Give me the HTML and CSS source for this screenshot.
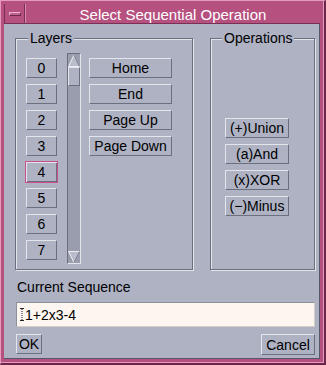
FILE: index.html
```html
<!DOCTYPE html>
<html>
<head>
<meta charset="utf-8">
<link rel="stylesheet" href="styles.css">
</head>
<body>
<div class="window">
  <div class="titlebar">
    <div class="menu-btn"><span class="menu-bar"></span></div>
    <div class="title">Select Sequential Operation</div>
  </div>
  <div class="client">
    <div class="groups">
      <div class="group layers">
        <div class="legend">Layers</div>
        <div class="layers-body">
          <div class="col layer-col">
            <button class="btn layer">0</button>
            <button class="btn layer">1</button>
            <button class="btn layer">2</button>
            <button class="btn layer">3</button>
            <button class="btn layer focused">4</button>
            <button class="btn layer">5</button>
            <button class="btn layer">6</button>
            <button class="btn layer">7</button>
          </div>
          <div class="scrollbar">
            <div class="arrow">
              <svg width="12" height="13" viewBox="0 0 12 13"><polygon points="6,1 11.5,12.5 0.5,12.5" fill="#b9bccb" stroke="none"/><path d="M0.5 12.5 L6 1" stroke="#eceef3" fill="none"/><path d="M6 1 L11.5 12.5" stroke="#808391" fill="none"/><path d="M0.5 12.5 H11.5" stroke="#eceef3" fill="none"/></svg>
            </div>
            <div class="thumb"></div>
            <div class="trough"></div>
            <div class="arrow">
              <svg width="12" height="12" viewBox="0 0 12 12"><polygon points="0.5,0.5 11.5,0.5 6,11.5" fill="#b9bccb" stroke="none"/><path d="M0.5 0.5 H11.5" stroke="#eceef3" fill="none"/><path d="M0.5 0.5 L6 11.5" stroke="#eceef3" fill="none"/><path d="M11.5 0.5 L6 11.5" stroke="#808391" fill="none"/></svg>
            </div>
          </div>
          <div class="col nav-col">
            <button class="btn nav">Home</button>
            <button class="btn nav">End</button>
            <button class="btn nav">Page Up</button>
            <button class="btn nav">Page Down</button>
          </div>
        </div>
      </div>
      <div class="group ops">
        <div class="legend">Operations</div>
        <div class="ops-body">
          <button class="btn op">(+)Union</button>
          <button class="btn op">(a)And</button>
          <button class="btn op">(x)XOR</button>
          <button class="btn op">(&minus;)Minus</button>
        </div>
      </div>
    </div>
    <div class="seq">
      <div class="seq-label">Current Sequence</div>
      <div class="field">
        <svg class="caret" width="4" height="13" viewBox="0 0 4 13"><path d="M0 0.5 H4 M0 12.5 H4" stroke="#222" stroke-width="1" fill="none"/><path d="M2 1 V12" stroke="#222" stroke-width="1" stroke-dasharray="1 1" fill="none"/></svg>
        <span class="field-text">1+2x3-4</span>
      </div>
      <div class="actions">
        <button class="btn ok">OK</button>
        <button class="btn cancel">Cancel</button>
      </div>
    </div>
  </div>
</div>
</body>
</html>
```

FILE: styles.css
```css
* { box-sizing: border-box; }

html, body {
  margin: 0;
  padding: 0;
  background: #b5507f;
}

body {
  font-family: "Liberation Sans", Arial, sans-serif;
  font-size: 14px;
  color: #000;
}

.window {
  width: 326px;
  height: 365px;
  background: #b5507f;
  border-style: solid;
  border-width: 1px 2px 2px 1px;
  border-color: #e69bbd #6a2749 #6a2749 #e69bbd;
  box-shadow: inset -1px -1px 0 #e69bbd;
  padding: 3px 4px 4px 3px;
  display: flex;
  flex-direction: column;
}

.titlebar {
  height: 20px;
  display: flex;
  border-left: 1px solid #7a2f55;
  border-bottom: 1px solid #7a2f55;
  background: #b5507f;
}

.menu-btn {
  width: 20px;
  border-right: 1px solid #7a2f55;
  display: flex;
  align-items: center;
  justify-content: center;
  padding-left: 1px;
}

.menu-bar {
  display: block;
  width: 12px;
  height: 4px;
  background: #c4628f;
  border-style: solid;
  border-width: 1px;
  border-color: #f0b4cf #6a2749 #6a2749 #f0b4cf;
}

.title {
  flex: 1;
  border-left: 1px solid #d98aaf;
  color: #fff;
  font-size: 15px;
  line-height: 19px;
  text-align: center;
  padding-top: 1px;
}

.client {
  flex: 1;
  background: #aeb2c3;
  border-right: 1px solid #55586a;
  border-bottom: 1px solid #55586a;
  padding: 14px 3px 0 11px;
  display: flex;
  flex-direction: column;
}

.groups {
  display: flex;
  gap: 17px;
  height: 232px;
}

.group {
  border: 1px solid #6c6f7e;
  box-shadow: inset 1px 1px 0 #e3e5ec, 1px 1px 0 #e3e5ec;
  height: 232px;
}

.group.layers { width: 178px; }
.group.ops { width: 105px; }

.legend {
  width: fit-content;
  background: #aeb2c3;
  line-height: 16px;
  height: 16px;
  padding: 0 2px;
  margin: -9px 0 -7px 12px;
  position: relative;
}

.group.ops .legend { margin-left: 11px; }

.layers-body {
  display: flex;
  align-items: flex-start;
  padding: 14px 0 0 10px;
}

.col {
  display: flex;
  flex-direction: column;
  gap: 6px;
  margin-top: 5px;
}

.btn {
  font-family: "Liberation Sans", Arial, sans-serif;
  font-size: 14px;
  color: #000;
  background: #aeb2c3;
  border-style: solid;
  border-width: 1px;
  border-color: #e3e5ec #6c6f7e #6c6f7e #e3e5ec;
  padding: 0;
  margin: 0;
  height: 20px;
  line-height: 18px;
  text-align: center;
  white-space: nowrap;
  outline: none;
}

.btn.layer { width: 31px; }

.btn.layer.focused {
  width: 33px;
  height: 22px;
  margin: -1px 0 -1px -1px;
  border-color: #c8508a;
  box-shadow: inset 1px 1px 0 #e3e5ec, inset -1px -1px 0 #6c6f7e;
  line-height: 20px;
}

.nav-col { margin-left: 8px; }
.btn.nav { width: 83px; }

.scrollbar {
  margin-left: 9px;
  width: 14px;
  height: 211px;
  background: #9a9dad;
  border-style: solid;
  border-width: 1px;
  border-color: #6c6f7e #e3e5ec #e3e5ec #6c6f7e;
  display: flex;
  flex-direction: column;
}

.arrow {
  display: flex;
  line-height: 0;
}

.arrow svg { display: block; }

.thumb {
  height: 19px;
  background: #aeb2c3;
  border-style: solid;
  border-width: 1px;
  border-color: #e3e5ec #6c6f7e #6c6f7e #e3e5ec;
}

.trough { flex: 1; }

.ops-body {
  display: flex;
  flex-direction: column;
  gap: 6px;
  padding: 79px 0 0 14px;
}

.btn.op { width: 64px; }

.seq {
  padding-left: 1px;
  display: flex;
  flex-direction: column;
}

.seq-label {
  margin-top: 9px;
  padding-left: 1px;
  line-height: 16px;
}

.field {
  margin-top: 7px;
  width: 299px;
  height: 25px;
  background: #fdf5ef;
  border-style: solid;
  border-width: 1px;
  border-color: #8c8e99 #d6cdc6 #d6cdc6 #8c8e99;
  display: flex;
  align-items: center;
  padding-left: 3px;
}

.caret { display: block; margin-right: 1px; }

.field-text {
  font-size: 14px;
  line-height: 16px;
}

.actions {
  margin-top: 7px;
  width: 299px;
  display: flex;
  justify-content: space-between;
  align-items: flex-start;
}

.btn.ok { width: 26px; }
.btn.cancel { width: 54px; height: 21px; }
```
